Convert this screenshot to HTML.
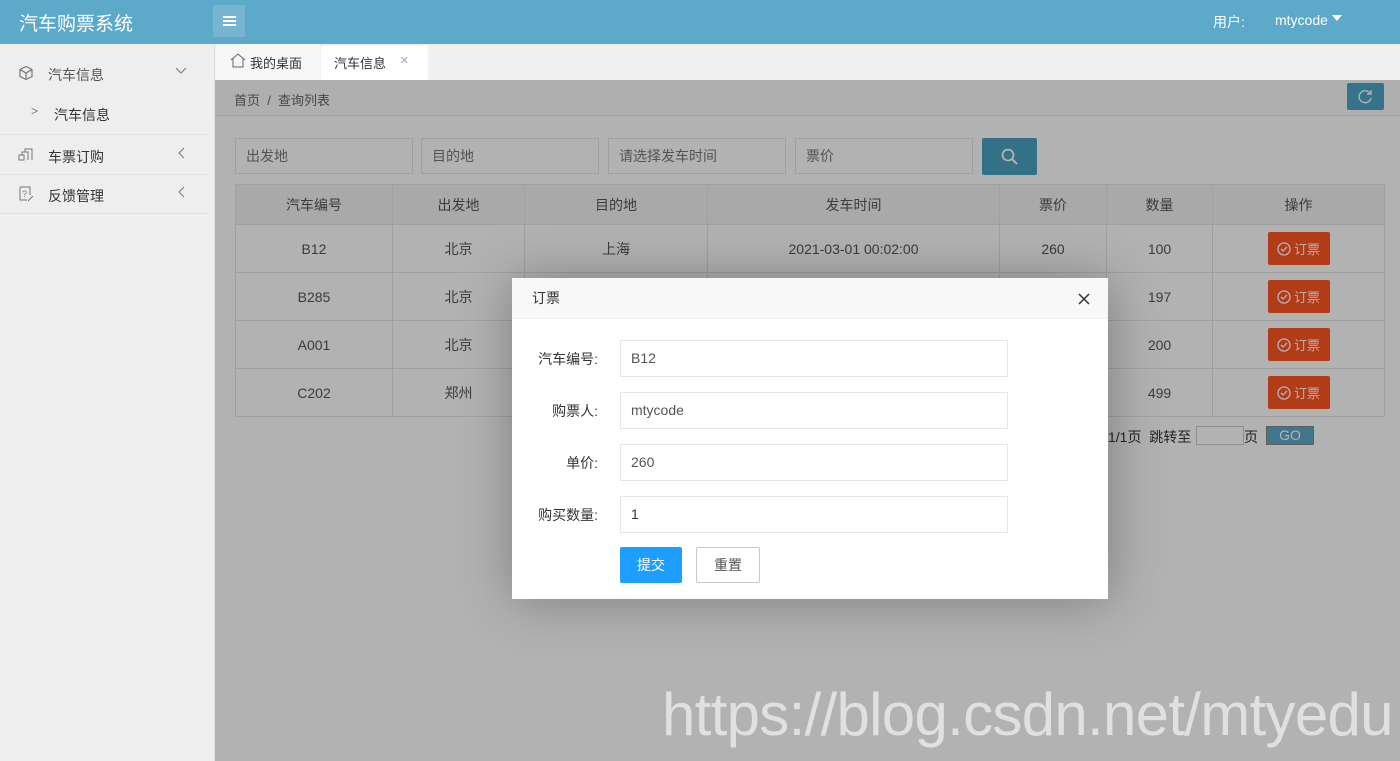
<!DOCTYPE html>
<html><head><meta charset="utf-8"><style>
*{box-sizing:border-box;margin:0;padding:0}
body{width:1400px;height:761px;overflow:hidden;position:relative;font-family:"Liberation Sans","Noto Sans CJK SC",sans-serif;font-size:14px;color:#333;background:#f0f0f0}
.abs{position:absolute}
.hdr{left:0;top:0;width:1400px;height:44px;background:#5da9c9}
.side{left:0;top:44px;width:215px;height:717px;background:#eeeeee;border-right:1px solid #ddd}
.side .it{position:absolute;left:0;width:208px;border-bottom:1px solid #e2e2e2;color:#333}
.main{left:215px;top:80px;width:1185px;height:681px;background:#fff}
.inp{position:absolute;height:36px;border:1px solid #e6e6e6;background:#fff;color:#777;padding-left:10px;line-height:34px}
table{position:absolute;left:20px;top:104px;border-collapse:collapse;font-size:14px}
td,th{border:1px solid #e6e6e6;text-align:center;font-weight:normal;color:#555}
th{background:#f2f2f2;height:40px}
td{height:48px}
.ob{display:inline-flex;align-items:center;justify-content:center;gap:3px;background:#ff5722;color:#fff;width:62px;height:33px;border-radius:2px;font-size:13px;vertical-align:middle}
.ov{left:215px;top:80px;width:1185px;height:681px;background:rgba(0,0,0,0.3)}
.modal{left:512px;top:278px;width:596px;height:321px;background:#fff;box-shadow:1px 1px 50px rgba(0,0,0,.3)}
.mh{height:41px;background:#f8f8f8;border-bottom:1px solid #eee;padding-left:20px;line-height:41px;color:#333}
.lab{position:absolute;width:86px;text-align:right;left:0;color:#333}
.mi{position:absolute;left:108px;width:388px;height:37px;border:1px solid #e6e6e6;line-height:35px;padding-left:10px;color:#555}
</style></head><body>
<div class="abs hdr">
<div class="abs" style="left:19px;top:9px;color:#fff;font-size:19px">汽车购票系统</div>
<div class="abs" style="left:213px;top:5px;width:32px;height:32px;background:rgba(255,255,255,.15);border-radius:2px">
<div class="abs" style="left:10px;top:11px;width:13px;height:2px;background:#fff"></div>
<div class="abs" style="left:10px;top:15px;width:13px;height:2px;background:#fff"></div>
<div class="abs" style="left:10px;top:19px;width:13px;height:2px;background:#fff"></div></div>
<div class="abs" style="left:1213px;top:12px;color:#fff;font-size:14px">用户:</div>
<div class="abs" style="left:1275px;top:12px;color:#fff;font-size:14px">mtycode</div>
<div class="abs" style="left:1332px;top:15px;width:0;height:0;border-left:5px solid transparent;border-right:5px solid transparent;border-top:6px solid #fff"></div>
</div>
<div class="abs side">
<div class="it" style="top:0;height:91px">
<svg class="abs" style="left:18px;top:21px" width="16" height="16" viewBox="0 0 16 16"><path d="M8 1.5 14 4.5v7L8 14.5 2 11.5v-7z M2 4.5 8 8l6-3.5M8 8v6.5" fill="none" stroke="#777" stroke-width="1.2"/></svg>
<div class="abs" style="left:48px;top:21px;color:#555">汽车信息</div>
<svg class="abs" style="left:175px;top:23px" width="12" height="8"><path d="M1 1l5 5 5-5" fill="none" stroke="#777"/></svg>
<div class="abs" style="left:31px;top:60px;color:#777;font-size:12px">&gt;</div>
<div class="abs" style="left:54px;top:61px;color:#333">汽车信息</div>
</div>
<div class="it" style="top:91px;height:40px">
<svg class="abs" style="left:18px;top:13px" width="16" height="14"><path d="M1 12V7h5v5zM4 7V4h6v8M7 4V1h7v11" fill="none" stroke="#777"/></svg>
<div class="abs" style="left:48px;top:12px">车票订购</div>
<svg class="abs" style="left:177px;top:12px" width="8" height="12"><path d="M7 1 2 6l5 5" fill="none" stroke="#777"/></svg>
</div>
<div class="it" style="top:131px;height:39px">
<svg class="abs" style="left:18px;top:11px" width="16" height="16"><path d="M2 1h10v8M2 1v13h7" fill="none" stroke="#777"/><path d="M10 15l5-5" stroke="#777"/><text x="4" y="11" font-size="9" fill="#777">?</text></svg>
<div class="abs" style="left:48px;top:11px">反馈管理</div>
<svg class="abs" style="left:177px;top:11px" width="8" height="12"><path d="M7 1 2 6l5 5" fill="none" stroke="#777"/></svg>
</div>
</div>
<div class="abs" style="left:216px;top:44px;width:1184px;height:36px;background:#f0f0f0"></div>
<div class="abs" style="left:216px;top:44px;width:104px;height:36px;background:#f6f6f6">
<svg class="abs" style="left:14px;top:9px" width="16" height="15"><path d="M1 7 8 1l7 6M3 5.5V14h10V5.5" fill="none" stroke="#666"/></svg>
<div class="abs" style="left:34px;top:9px;color:#333;font-size:13px">我的桌面</div></div>
<div class="abs" style="left:321px;top:46px;width:107px;height:34px;background:#fff">
<div class="abs" style="left:13px;top:7px;color:#333;font-size:13px">汽车信息</div>
<div class="abs" style="left:79px;top:6px;color:#aaa;font-size:15px">×</div></div>
<div class="abs main">
<div class="abs" style="left:0;top:0;width:1185px;height:36px;border-bottom:1px solid #e6e6e6;background:#fbfbfb"></div>
<div class="abs" style="left:19px;top:10px;color:#666;font-size:13px">首页 &nbsp;/&nbsp; 查询列表</div>
<div class="abs" style="left:1132px;top:3px;width:37px;height:27px;background:#4da5c6;border-radius:2px">
<svg class="abs" style="left:11px;top:6px" width="15" height="15"><path d="M12.5 5A6 6 0 1 0 13 9" fill="none" stroke="#fff" stroke-width="1.4"/><path d="M13 1v4H9" fill="none" stroke="#fff" stroke-width="1.4"/></svg></div>
<div class="inp" style="left:20px;top:58px;width:178px">出发地</div>
<div class="inp" style="left:206px;top:58px;width:178px">目的地</div>
<div class="inp" style="left:393px;top:58px;width:178px">请选择发车时间</div>
<div class="inp" style="left:580px;top:58px;width:178px">票价</div>
<div class="abs" style="left:767px;top:58px;width:55px;height:37px;background:#4aa3c4;border-radius:2px">
<svg class="abs" style="left:18px;top:10px" width="20" height="18"><circle cx="8" cy="7" r="5.5" fill="none" stroke="#fff" stroke-width="1.8"/><path d="M12 11l5 5" stroke="#fff" stroke-width="2"/></svg></div>
<table>
<tr><th style="width:157px">汽车编号</th><th style="width:132px">出发地</th><th style="width:183px">目的地</th><th style="width:292px">发车时间</th><th style="width:107px">票价</th><th style="width:106px">数量</th><th style="width:172px">操作</th></tr>
<tr><td>B12</td><td>北京</td><td>上海</td><td>2021-03-01 00:02:00</td><td>260</td><td>100</td><td><span class="ob"><svg width="14" height="14"><circle cx="7" cy="7" r="6" fill="none" stroke="#fff" stroke-width="1.3"/><path d="M4 7l2 2 4-4" fill="none" stroke="#fff" stroke-width="1.3"/></svg>订票</span></td></tr>
<tr><td>B285</td><td>北京</td><td></td><td></td><td></td><td>197</td><td><span class="ob"><svg width="14" height="14"><circle cx="7" cy="7" r="6" fill="none" stroke="#fff" stroke-width="1.3"/><path d="M4 7l2 2 4-4" fill="none" stroke="#fff" stroke-width="1.3"/></svg>订票</span></td></tr>
<tr><td>A001</td><td>北京</td><td></td><td></td><td></td><td>200</td><td><span class="ob"><svg width="14" height="14"><circle cx="7" cy="7" r="6" fill="none" stroke="#fff" stroke-width="1.3"/><path d="M4 7l2 2 4-4" fill="none" stroke="#fff" stroke-width="1.3"/></svg>订票</span></td></tr>
<tr><td>C202</td><td>郑州</td><td></td><td></td><td></td><td>499</td><td><span class="ob"><svg width="14" height="14"><circle cx="7" cy="7" r="6" fill="none" stroke="#fff" stroke-width="1.3"/><path d="M4 7l2 2 4-4" fill="none" stroke="#fff" stroke-width="1.3"/></svg>订票</span></td></tr>
</table>
<div class="abs" style="left:893px;top:347px;color:#333">1/1页 &nbsp;跳转至</div>
<div class="abs" style="left:981px;top:346px;width:48px;height:19px;border:1px solid #ccc;background:#fff"></div>
<div class="abs" style="left:1029px;top:347px;color:#333">页</div>
<div class="abs" style="left:1051px;top:346px;width:48px;height:19px;background:#5fa9c9;border:1px solid #888;color:#fff;text-align:center;line-height:17px">GO</div>
</div>
<div class="abs ov"></div>
<div class="abs" style="left:662px;top:680px;color:rgba(255,255,255,.6);font-size:60px;letter-spacing:-0.7px;white-space:nowrap">https://blog.csdn.net/mtyedu</div>
<div class="abs modal">
<div class="mh">订票</div>
<svg class="abs" style="left:566px;top:15px" width="12" height="12"><path d="M1 1l10 10M11 1 1 11" stroke="#333" stroke-width="1.5"/></svg>
<div class="lab" style="top:71px">汽车编号:</div><div class="mi" style="top:62px">B12</div>
<div class="lab" style="top:123px">购票人:</div><div class="mi" style="top:114px">mtycode</div>
<div class="lab" style="top:175px">单价:</div><div class="mi" style="top:166px">260</div>
<div class="lab" style="top:227px">购买数量:</div><div class="mi" style="top:218px;color:#333">1</div>
<div class="abs" style="left:108px;top:269px;width:62px;height:36px;background:#1e9fff;color:#fff;text-align:center;line-height:36px;border-radius:2px">提交</div>
<div class="abs" style="left:184px;top:269px;width:64px;height:36px;border:1px solid #c9c9c9;color:#555;text-align:center;line-height:34px;border-radius:2px">重置</div>
</div>
</body></html>
